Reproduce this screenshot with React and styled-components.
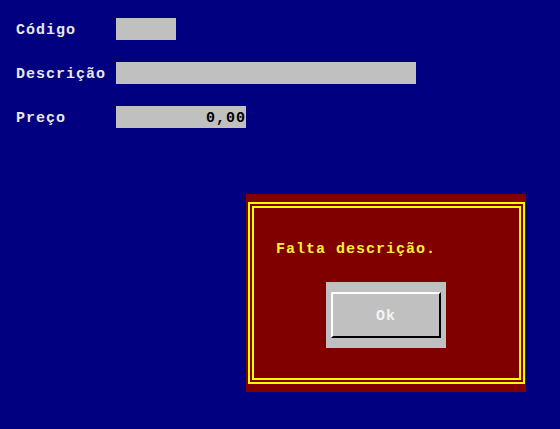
import React from "react";
import styled, { createGlobalStyle } from "styled-components";

const GlobalStyle = createGlobalStyle`
    html, body {
        margin: 0;
        padding: 0;
        background: #000080;
    }
    body {
        font-family: "Liberation Mono", "DejaVu Sans Mono", monospace;
        font-size: 15px;
        font-weight: bold;
        letter-spacing: 1px;
    }
`;

const Screen = styled.div`
    position: relative;
    width: 560px;
    height: 429px;
    background: #000080;
    overflow: hidden;
`;

const Form = styled.div`
    display: flex;
    flex-direction: column;
    gap: 22px;
    padding: 18px 0 0 16px;
`;

const Row = styled.div`
    display: flex;
    align-items: center;
    height: 22px;
`;

const Label = styled.span`
    width: 100px;
    padding-top: 3px;
    color: #e8e8e8;
    line-height: 22px;
`;

const Field = styled.input`
    width: ${(props) => props.size}px;
    height: 22px;
    box-sizing: border-box;
    border: none;
    outline: none;
    padding: 2px 0 0 0;
    margin: 0;
    background: #c0c0c0;
    color: #000;
    font: inherit;
    letter-spacing: 1px;
    text-align: ${(props) => (props.right ? "right" : "left")};
`;

const Dialog = styled.div`
    position: absolute;
    left: 246px;
    top: 194px;
    width: 280px;
    height: 198px;
    box-sizing: border-box;
    padding: 8px 1px 8px 2px;
    background: #800000;
`;

const Frame = styled.div`
    height: 100%;
    box-sizing: border-box;
    border: 6px double #ffff00;
    display: flex;
    flex-direction: column;
    align-items: flex-start;
    padding: 32px 0 0 22px;
`;

const Message = styled.div`
    color: #ffee33;
    line-height: 20px;
`;

const ButtonWell = styled.div`
    margin: 22px 0 0 50px;
    padding: 10px 5px;
    background: #c0c0c0;
`;

const Button = styled.button`
    display: flex;
    align-items: center;
    justify-content: center;
    width: 110px;
    height: 46px;
    box-sizing: border-box;
    margin: 0;
    padding: 2px 0 0 0;
    background: #c0c0c0;
    border-style: solid;
    border-width: 2px;
    border-color: #ffffff #000000 #000000 #ffffff;
    color: #f4f4f4;
    font: inherit;
    letter-spacing: 1px;
    cursor: pointer;
`;

const App = () => {
    return (
        <Screen>
            <GlobalStyle />
            <Form>
                <Row>
                    <Label>Código</Label>
                    <Field size={60} value="" readOnly />
                </Row>
                <Row>
                    <Label>Descrição</Label>
                    <Field size={300} value="" readOnly />
                </Row>
                <Row>
                    <Label>Preço</Label>
                    <Field size={130} right value="0,00" readOnly />
                </Row>
            </Form>
            <Dialog>
                <Frame>
                    <Message>Falta descrição.</Message>
                    <ButtonWell>
                        <Button>Ok</Button>
                    </ButtonWell>
                </Frame>
            </Dialog>
        </Screen>
    );
};

export default App;
